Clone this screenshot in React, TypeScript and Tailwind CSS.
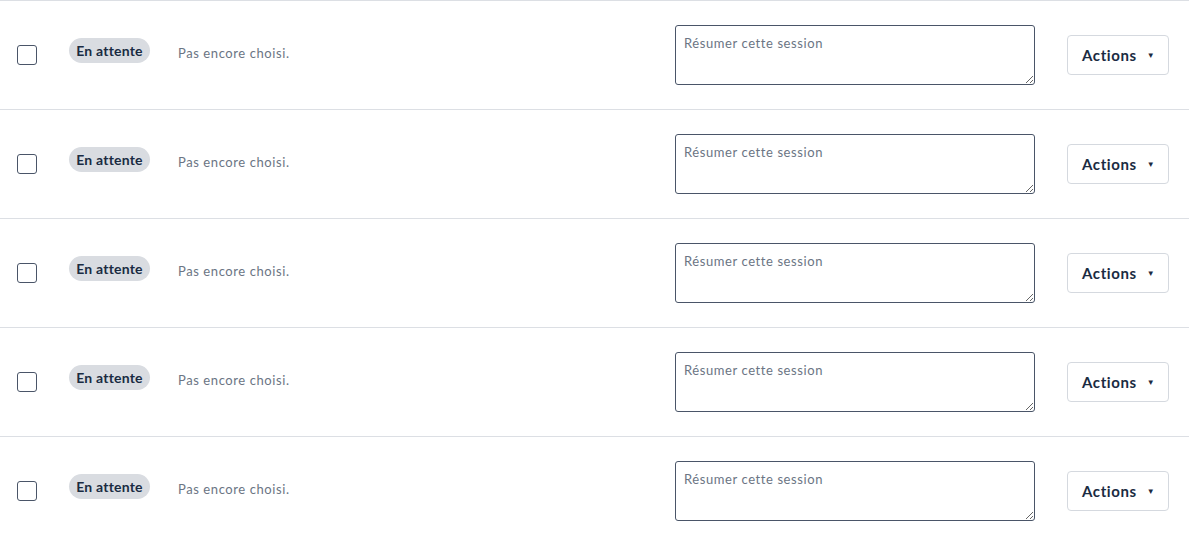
const rows = [1, 2, 3, 4, 5];

function Row() {
  return (
    <div className="flex h-[109px] items-center border-t border-[#dcdfe4] pl-[17px] pr-5">
      <input
        type="checkbox"
        className="size-5 shrink-0 appearance-none rounded-[3px] border border-[#4a5568] bg-white"
      />
      <span className="ml-8 mb-[9px] inline-flex h-[25px] w-[81px] shrink-0 items-center justify-center rounded-full bg-[#d9dce1] text-[14px] font-bold tracking-[0.015em] text-[#1a2b42]">
        En attente
      </span>
      <span className="ml-7 mb-[3px] flex-1 text-[13px] tracking-[0.045em] text-[#6b7584]">Pas encore choisi.</span>
      <textarea
        placeholder="Résumer cette session"
        className="h-[60px] w-[360px] shrink-0 rounded-[3px] border border-[#4a5568] px-2 py-[9px] text-[13px] leading-[17px] tracking-[0.045em] text-[#1a2b42] outline-none placeholder:text-[#6b7584]"
      />
      <button
        type="button"
        className="ml-8 flex h-10 w-[102px] shrink-0 items-center gap-[10px] rounded-[4px] border border-[#d5d9df] bg-white pl-[14px] text-[15px] font-bold tracking-[0.04em] text-[#1a2b42]"
      >
        Actions
        <span className="text-[8px] leading-none">▼</span>
      </button>
    </div>
  );
}

export default function App() {
  return (
    <div className="min-h-[543px] bg-white" style={{ fontFamily: "Lato, 'Noto Sans', sans-serif" }}>
      {rows.map((r) => (
        <Row key={r} />
      ))}
    </div>
  );
}
